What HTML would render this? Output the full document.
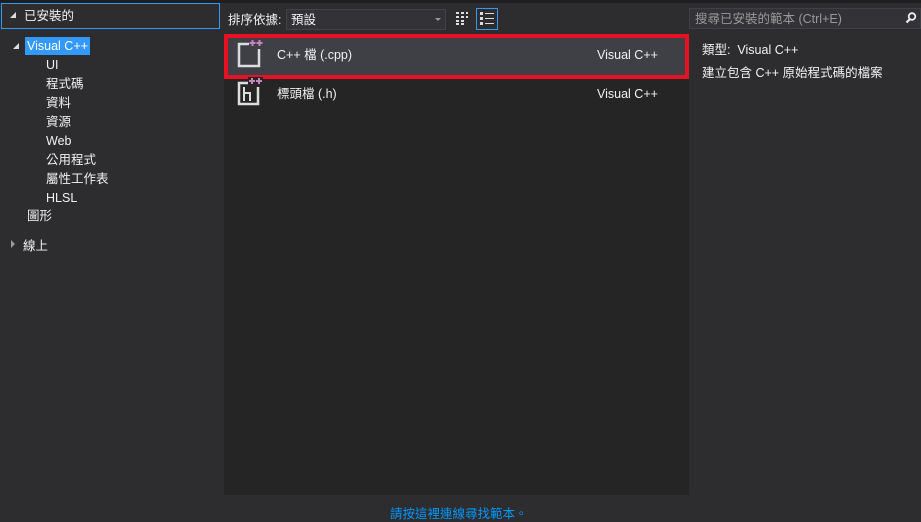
<!DOCTYPE html>
<html><head><meta charset="utf-8"><style>
*{margin:0;padding:0;box-sizing:border-box}
body{width:921px;height:515px;background:#2d2d30;overflow:hidden;font-family:"Liberation Sans","Noto Sans CJK TC",sans-serif;font-size:12.5px;line-height:16px;color:#f1f1f1;position:relative}
.a{position:absolute;white-space:nowrap}
.tri{width:0;height:0;border-left:7px solid transparent;border-bottom:7px solid #ddd}
</style></head><body>
<div class="a" style="left:0;top:0;width:921px;height:3px;background:#1e1e1e"></div>
<div class="a" style="left:1px;top:3px;width:219px;height:26px;border:1px solid #3399ff"></div>
<div class="a tri" style="left:10px;top:12px;border-left-width:6px;border-bottom-width:6px"></div>
<div class="a" style="left:24px;top:8px">已安裝的</div>
<div class="a tri" style="left:13px;top:43px;border-left-width:6px;border-bottom-width:6px"></div>
<div class="a" style="left:25px;top:37px;background:#3399ff;color:#fff;padding:1px 2px;height:18px;line-height:16px">Visual C++</div>
<div class="a" style="left:46px;top:57px">UI</div>
<div class="a" style="left:46px;top:76px">程式碼</div>
<div class="a" style="left:46px;top:95px">資料</div>
<div class="a" style="left:46px;top:114px">資源</div>
<div class="a" style="left:46px;top:133px">Web</div>
<div class="a" style="left:46px;top:152px">公用程式</div>
<div class="a" style="left:46px;top:171px">屬性工作表</div>
<div class="a" style="left:46px;top:190px">HLSL</div>
<div class="a" style="left:27px;top:208px">圖形</div>
<div class="a" style="left:11px;top:240px;width:0;height:0;border-top:4px solid transparent;border-bottom:4px solid transparent;border-left:4px solid #999"></div>
<div class="a" style="left:23px;top:238px">線上</div>

<div class="a" style="left:228px;top:12px">排序依據:</div>
<div class="a" style="left:286px;top:9px;width:160px;height:21px;background:#333337;border:1px solid #434346;padding:2px 4px">預設</div>
<div class="a" style="left:435px;top:18px;width:0;height:0;border-left:3px solid transparent;border-right:3px solid transparent;border-top:3px solid #999"></div>
<svg class="a" style="left:455px;top:11px" width="14" height="14"><g fill="#ddd"><rect x="1" y="1" width="3" height="2"/><rect x="6" y="1" width="3" height="2"/><rect x="11" y="1" width="2" height="2"/><rect x="1" y="5" width="3" height="2"/><rect x="6" y="5" width="3" height="2"/><rect x="11" y="5" width="2" height="2"/><rect x="1" y="9" width="3" height="2"/><rect x="6" y="9" width="3" height="2"/><rect x="1" y="12" width="3" height="2"/><rect x="6" y="12" width="3" height="2"/></g></svg>
<div class="a" style="left:476px;top:8px;width:22px;height:22px;border:1px solid #3399ff"></div>
<svg class="a" style="left:480px;top:12px" width="14" height="14"><g fill="#ddd"><rect x="0" y="0" width="3" height="3"/><rect x="5" y="1" width="9" height="1"/><rect x="0" y="5" width="3" height="3"/><rect x="5" y="6" width="9" height="1"/><rect x="0" y="10" width="3" height="3"/><rect x="5" y="11" width="9" height="1"/></g></svg>

<div class="a" style="left:224px;top:34px;width:465px;height:461px;background:#252526"></div>
<div class="a" style="left:227px;top:37px;width:459px;height:38px;background:#3f3f46"></div>
<div class="a" style="left:224px;top:34px;width:465px;height:45px;border:4px solid #e81123"></div>
<svg class="a" style="left:235px;top:39px" width="32" height="32"><rect x="4" y="5" width="20" height="22" fill="none" stroke="#ddd" stroke-width="2.5"/><rect x="14" y="0" width="15" height="10" fill="#3f3f46"/><g fill="#c586c0"><rect x="14.5" y="3" width="6" height="2"/><rect x="16.5" y="1" width="2" height="6"/><rect x="21.5" y="3" width="6" height="2"/><rect x="23.5" y="1" width="2" height="6"/></g></svg>
<div class="a" style="left:277px;top:47px">C++ 檔 (.cpp)</div>
<div class="a" style="left:597px;top:47px">Visual C++</div>
<svg class="a" style="left:235px;top:77px" width="32" height="32"><rect x="4" y="6" width="19" height="21" fill="none" stroke="#ddd" stroke-width="2.5"/><rect x="13" y="0" width="15" height="10" fill="#252526"/><path d="M9 10v14M9 16h6v8" fill="none" stroke="#ddd" stroke-width="2"/><g fill="#c586c0"><rect x="14" y="3" width="6" height="2"/><rect x="16" y="1" width="2" height="6"/><rect x="21" y="3" width="6" height="2"/><rect x="23" y="1" width="2" height="6"/></g></svg>
<div class="a" style="left:277px;top:86px">標頭檔 (.h)</div>
<div class="a" style="left:597px;top:86px">Visual C++</div>

<div class="a" style="left:689px;top:8px;width:232px;height:21px;background:#333337;border:1px solid #3f3f46;color:#999;padding:2px 5px">搜尋已安裝的範本 (Ctrl+E)</div>
<svg class="a" style="left:905px;top:12px" width="12" height="12"><circle cx="7" cy="4.5" r="3.3" fill="none" stroke="#eee" stroke-width="1.8"/><path d="M5 7L1.5 10.5" stroke="#eee" stroke-width="2.2"/></svg>
<div class="a" style="left:702px;top:42px">類型:&nbsp;&nbsp;Visual C++</div>
<div class="a" style="left:702px;top:65px">建立包含 C++ 原始程式碼的檔案</div>
<div class="a" style="left:390px;top:506px;color:#0097fb">請按這裡連線尋找範本。</div>
</body></html>
